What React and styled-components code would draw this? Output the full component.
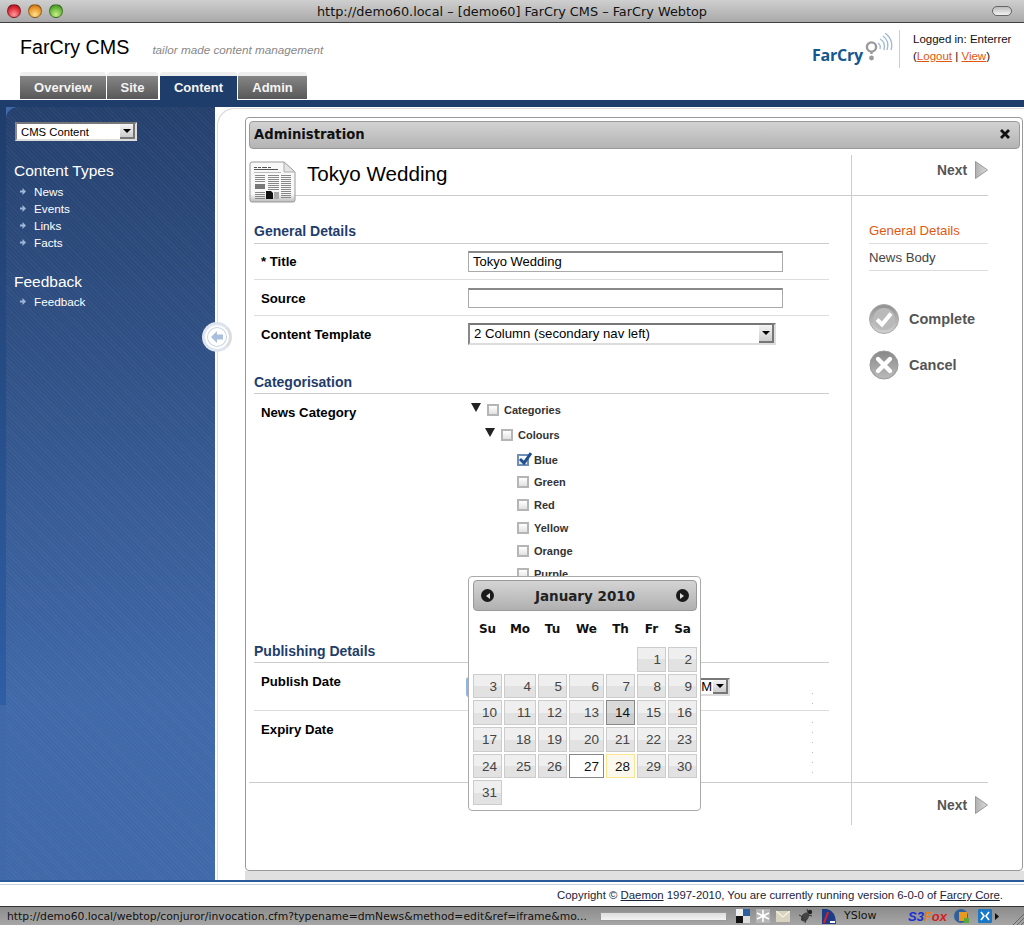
import React from 'react';
import styled, { createGlobalStyle } from 'styled-components';

const Global = createGlobalStyle`
  html, body { margin: 0; padding: 0; background: #fff; }
  body { font-family: "Liberation Sans", Arial, sans-serif; }
  * { box-sizing: border-box; }
`;

const Page = styled.div`
  width: 1024px;
  height: 925px;
  display: flex;
  flex-direction: column;
  overflow: hidden;
  position: relative;
`;

/* browser chrome */
const TitleBar = styled.div`
  height: 23px;
  flex: none;
  display: flex;
  align-items: center;
  padding: 0 12px 0 7px;
  background: linear-gradient(#cfcfcf, #a9a9a9);
  border-bottom: 1px solid #3f3f3f;
`;
const Lights = styled.div`
  display: flex;
  gap: 7px;
`;
const Light = styled.span`
  width: 14px;
  height: 14px;
  border-radius: 50%;
  border: 1px solid rgba(0, 0, 0, 0.35);
  background: radial-gradient(circle at 50% 80%, ${p => p.$glow} 0%, ${p => p.$base} 60%, ${p => p.$dark} 100%);
`;
const PageTitle = styled.div`
  flex: 1;
  text-align: center;
  font: 12.85px "DejaVu Sans", sans-serif;
  color: #111;
  padding-right: 31px;
`;
const Pill = styled.span`
  width: 20px;
  height: 10px;
  border-radius: 5px;
  border: 1px solid #666;
  background: linear-gradient(#bbb, #f2f2f2);
`;

/* header */
const Header = styled.header`
  height: 77px;
  flex: none;
  display: flex;
  flex-direction: column;
  background: #fff;
`;
const Brand = styled.div`
  height: 49px;
  flex: none;
  display: flex;
  align-items: flex-start;
  padding-left: 20px;
`;
const SiteName = styled.div`
  font-size: 19.7px;
  line-height: 24px;
  margin-top: 12px;
  color: #000;
`;
const Tagline = styled.div`
  font-size: 11.7px;
  font-style: italic;
  color: #888;
  line-height: 14px;
  margin: 20px 0 0 23px;
`;
const Logo = styled.div`
  margin-left: auto;
  margin-top: 10px;
  height: 28px;
  display: flex;
  align-items: flex-end;
  color: #14578f;
  font: 700 16px/20px "Open Sans", sans-serif;
`;
const LogoWord = styled.span`
  letter-spacing: -0.2px;
  margin-bottom: -4px;
`;
const Who = styled.div`
  margin-left: 6px;
  margin-top: 7px;
  width: 125px;
  height: 38px;
  flex: none;
  padding: 1px 0 0 13px;
  border-left: 1px solid #ccc;
  font-size: 11.5px;
  line-height: 17px;
  color: #111;
  a { color: #e2570f; }
`;
const Tabs = styled.nav`
  display: flex;
  gap: 1px;
  padding-left: 20px;
`;
const Tab = styled.div`
  height: ${p => (p.$active ? '28px' : '27px')};
  width: ${p => p.$w}px;
  margin-right: ${p => p.$gap || 0}px;
  display: flex;
  align-items: center;
  justify-content: center;
  padding-bottom: ${p => (p.$active ? '1px' : '0')};
  font-size: 13px;
  font-weight: 700;
  color: #f4f4f4;
  border-radius: 3px 3px 0 0;
  border-top: 4px solid #eee;
  background: ${p => (p.$active ? '#1f3d6b' : 'linear-gradient(#858585, #585858)')};
`;
const Band = styled.div`
  height: 7px;
  flex: none;
  background: #1f3d6b;
`;

/* main area */
const Main = styled.div`
  flex: 1;
  display: flex;
  min-height: 0;
  position: relative;
`;
const SideWrap = styled.aside`
  width: 215px;
  flex: none;
  display: flex;
  background: #4069a9;
`;
const SideEdge = styled.div`
  width: 6px;
  height: 598px;
  flex: none;
  background: linear-gradient(#1f3d6b, #2f5ea5);
`;
const SidePanel = styled.div`
  flex: 1;
  padding: 15px 0 0 8px;
  border-radius: 12px 0 0 0;
  color: #fff;
  background:
    repeating-linear-gradient(45deg, rgba(255, 255, 255, 0.035) 0 1px, transparent 1px 3px),
    linear-gradient(#25406d 0, #4069a9 598px);
`;
const NativeSelect = styled.div`
  display: flex;
  align-items: center;
  justify-content: space-between;
  width: ${p => p.$w}px;
  height: ${p => p.$h}px;
  flex: none;
  margin-left: ${p => p.$left || 0}px;
  font-size: ${p => p.$size}px;
  line-height: 14px;
  color: #000;
  background: #fff;
  border-top: 2px solid #777;
  border-left: 2px solid #888;
  border-right: 2px solid #ddd;
  border-bottom: 2px solid #ddd;
  padding-left: ${p => p.$pad}px;
`;
const SelectValue = styled.span`
  margin-left: auto;
  margin-right: 1px;
  white-space: nowrap;
`;
const SelectButton = styled.span`
  width: 15px;
  height: 100%;
  flex: none;
  display: flex;
  align-items: center;
  justify-content: center;
  background: linear-gradient(#f4f4f4, #ccc);
  border-right: 2px solid #777;
  border-bottom: 2px solid #777;
  &::after {
    content: '';
    border-left: 4px solid transparent;
    border-right: 4px solid transparent;
    border-top: 4px solid #000;
  }
`;
const SideTitle = styled.h3`
  margin: ${p => p.$top}px 0 0;
  font-size: 15.5px;
  font-weight: 400;
  line-height: 20px;
`;
const SideList = styled.ul`
  list-style: none;
  margin: ${p => p.$top}px 0 0;
  padding: 0;
`;
const SideItem = styled.li`
  height: 17px;
  display: flex;
  align-items: center;
  gap: 8px;
  padding-left: 6px;
  font-size: 11.7px;
  color: #fff;
`;
const Bullet = () => (
  <svg width="6" height="7" viewBox="0 0 6 7" style={{ flex: 'none' }}>
    <path d="M0 2.5h2.5V0L6 3.5 2.5 7V4.5H0z" fill="#9db6d8" />
  </svg>
);

const Content = styled.main`
  flex: 1;
  min-width: 0;
  display: flex;
  flex-direction: column;
  background: #fff;
  border-radius: 16px 0 0 0;
  position: relative;
  box-shadow: inset 3px 2px 0 -1px #fff, inset 4px 3px 0 -1px #ddd;
`;
const Collapse = styled.div`
  position: absolute;
  left: -13px;
  top: 215px;
  width: 30px;
  height: 30px;
  border-radius: 50%;
  background: #fff;
  border: 3px solid #dfe5ee;
  border-right-color: #ddd;
  display: flex;
  align-items: center;
  justify-content: center;
  box-shadow: inset 0 0 0 2px #fff, inset 0 0 0 3px #c9d6e6;
`;
const Window = styled.section`
  flex: 1;
  margin: 10px 1px 0 30px;
  padding: 3px 2px 0 3px;
  border: 1px solid #999;
  border-radius: 4px;
  background: #fff;
  display: flex;
  flex-direction: column;
`;
const WindowBar = styled.div`
  height: 28px;
  flex: none;
  display: flex;
  align-items: center;
  justify-content: space-between;
  padding: 0 9px 2px 4px;
  border: 1px solid #999;
  border-radius: 4px;
  background: linear-gradient(#d2d2d2, #b4b4b4);
  font: 700 13.2px "DejaVu Sans", sans-serif;
  color: #111;
`;
const Strip = styled.div`
  height: 9px;
  flex: none;
  margin-left: 30px;
  background: #e0e0e0;
`;
const Split = styled.div`
  display: flex;
  flex: none;
  width: 739px;
  height: ${p => p.$h}px;
  margin-top: ${p => p.$top || 0}px;
  border-bottom: ${p => (p.$line ? '1px solid #ccc' : '0')};
`;
const Pane = styled.div`
  width: 602px;
  flex: none;
`;
const Rail = styled.div`
  flex: 1;
  border-left: 1px solid #ccc;
`;
const NextLink = styled.div`
  display: flex;
  justify-content: flex-end;
  align-items: center;
  gap: 8px;
  font-size: 13.8px;
  font-weight: 700;
  color: #555;
  padding-top: ${p => p.$top}px;
`;
const Heading = styled.div`
  display: flex;
  align-items: flex-start;
  gap: 11px;
  height: 40px;
`;
const HeadingIcon = styled.svg`
  flex: none;
  margin-top: 6px;
`;
const HeadingText = styled.h1`
  margin: 6px 0 0;
  font-size: 20.6px;
  font-weight: 400;
  line-height: 26px;
  color: #000;
`;
const Form = styled.form`
  padding-left: 5px;
  width: 580px;
`;
const SectionTitle = styled.h2`
  margin: ${p => p.$top}px 0 0;
  padding-bottom: ${p => p.$pad}px;
  font-size: 14px;
  line-height: 16px;
  font-weight: 700;
  color: #1f3d6b;
  border-bottom: 1px solid #ccc;
`;
const Row = styled.div`
  display: grid;
  grid-template-columns: 207px 1fr;
  align-items: start;
  height: ${p => p.$h}px;
  padding: ${p => p.$top}px 0 0 7px;
  border-bottom: ${p => (p.$line ? '1px solid #ddd' : '0')};
`;
const Label = styled.label`
  font-size: 13.2px;
  font-weight: 700;
  line-height: 18px;
  margin-top: ${p => p.$top || 0}px;
  color: #000;
`;
const TextInput = styled.div`
  width: 315px;
  height: ${p => p.$h}px;
  padding-left: 4px;
  font-size: 13px;
  line-height: 18px;
  color: #000;
  background: #fff;
  border: 1px solid #aaa;
  border-top: 2px solid #888;
`;
const Tree = styled.div`
  height: 252px;
  overflow: hidden;
  margin-top: -4px;
`;
const TreeRow = styled.div`
  display: flex;
  align-items: center;
  height: ${p => p.$h}px;
  padding-left: ${p => p.$indent}px;
  font-size: 11px;
  font-weight: 700;
  color: #333;
`;
const Caret = styled.span`
  width: 0;
  height: 0;
  flex: none;
  margin: -5px 6px 0 0;
  border-left: 5.5px solid transparent;
  border-right: 5.5px solid transparent;
  border-top: 9px solid #222;
`;
const Check = styled.span`
  width: 12px;
  height: 12px;
  flex: none;
  margin-right: 5px;
  position: relative;
  border: 2px solid ${p => (p.$on ? '#6f8fb8' : '#b5b5b5')};
  background: linear-gradient(#fff, #e2e2e2);
  svg { position: absolute; left: -1px; top: -4px; }
`;
const DateCell = styled.div`
  display: flex;
  align-items: flex-start;
`;
const DateField = styled.div`
  display: flex;
  align-items: center;
  justify-content: space-between;
  flex: none;
  width: 264px;
  margin: 4px 0 0 -2px;
`;
const DateInput = styled.div`
  width: 140px;
  height: 20px;
  border: 2px solid #8fb4e6;
  border-radius: 3px;
  background: #fff;
`;
const Dots = styled.span`
  display: block;
  flex: none;
  width: 1px;
  height: ${p => p.$h}px;
  margin: ${p => p.$top}px 0 0 ${p => p.$left}px;
  background: repeating-linear-gradient(#bbb 0 1px, transparent 1px 10px);
`;
const SideNav = styled.ul`
  list-style: none;
  margin: 21px 0 0 17px;
  padding: 0;
`;
const SideNavItem = styled.li`
  height: 27px;
  line-height: 27px;
  font-size: 13.2px;
  color: ${p => (p.$active ? '#e2570f' : '#444')};
  border-bottom: 1px solid #ddd;
`;
const Actions = styled.div`
  display: flex;
  flex-direction: column;
  gap: 16px;
  margin: 33px 0 0 17px;
`;
const Action = styled.div`
  display: flex;
  align-items: center;
  gap: 10px;
  height: 30px;
  font-size: 14.5px;
  font-weight: 700;
  color: #555;
`;

/* calendar popup */
const Calendar = styled.div`
  position: absolute;
  left: 253px;
  top: 469px;
  width: 233px;
  height: 235px;
  padding: 3px 3px 0 4px;
  background: #fff;
  border: 1px solid #aaa;
  border-radius: 4px;
`;
const CalHead = styled.div`
  height: 31px;
  display: flex;
  align-items: center;
  justify-content: space-between;
  padding: 0 7px;
  border: 1px solid #999;
  border-radius: 4px;
  background: linear-gradient(#d4d4d4, #b0b0b0);
  font: 700 13.5px "DejaVu Sans", sans-serif;
  color: #222;
`;
const CalArrow = styled.span`
  width: 13px;
  height: 13px;
  border-radius: 50%;
  background: #1a1a1a;
  display: flex;
  align-items: center;
  justify-content: center;
  &::after {
    content: '';
    border-top: 3.5px solid transparent;
    border-bottom: 3.5px solid transparent;
    border-${p => (p.$next ? 'left' : 'right')}: 4px solid #ddd;
  }
`;
const CalGrid = styled.div`
  display: grid;
  grid-template-columns: 29px 32px 29px 35px 29px 29px 29px;
  grid-auto-rows: 24.7px;
  column-gap: 2px;
  row-gap: 2px;
`;
const Weekdays = styled(CalGrid)`
  grid-auto-rows: 19px;
  margin-top: 9px;
  margin-bottom: 8px;
`;
const Weekday = styled.div`
  text-align: center;
  font: 700 12px/19px "DejaVu Sans", sans-serif;
  color: #111;
`;
const dayBg = {
  base: 'linear-gradient(#efefef 0 50%, #e2e2e2 50%)',
  selected: 'linear-gradient(#dadada 0 50%, #cecece 50%)',
  today: '#fff',
  hover: '#fbf9ee',
};
const dayBorder = { base: '#ccc', selected: '#888', today: '#888', hover: '#fbe58f' };
const Day = styled.div`
  grid-column: ${p => p.$col || 'auto'};
  padding-right: 4px;
  text-align: right;
  font-size: 13.5px;
  line-height: 23px;
  color: ${p => (p.$kind === 'base' ? '#444' : '#111')};
  border: 1px solid ${p => dayBorder[p.$kind]};
  background: ${p => dayBg[p.$kind]};
`;

/* footer + status bar */
const FootRule = styled.div`
  height: 5px;
  flex: none;
  background: #fff;
  border-top: 2px solid #2a5a9a;
  border-bottom: 1px solid #ccd2da;
`;
const Footer = styled.footer`
  height: 21px;
  flex: none;
  text-align: right;
  padding: 2px 21px 0 0;
  font-size: 11.4px;
  line-height: 16px;
  color: #1a2438;
  a { color: inherit; }
`;
const StatusBar = styled.div`
  height: 19px;
  flex: none;
  display: flex;
  align-items: center;
  padding-left: 7px;
  border-top: 1px solid #333;
  background: linear-gradient(#8c8c8c, #a6a6a6);
  font: 10.8px "DejaVu Sans", sans-serif;
  color: #111;
`;
const StatusUrl = styled.span`
  width: 593px;
  flex: none;
  white-space: nowrap;
  overflow: hidden;
`;
const Progress = styled.span`
  width: 127px;
  height: 9px;
  flex: none;
  background: linear-gradient(#ddd, #f4f4f4);
  border: 1px solid #999;
`;
const Tray = styled.div`
  display: flex;
  align-items: center;
  flex: 1;
  margin-left: 9px;
  height: 100%;
`;
const TrayIcon = styled.svg`
  flex: none;
  margin-right: ${p => p.$gap}px;
`;
const Grip = styled.svg`
  flex: none;
  margin-left: auto;
  align-self: flex-end;
`;
const YSlow = styled.span`
  color: #111;
  font-size: 11px;
  width: 31px;
  margin-right: 33px;
  margin-top: -1px;
`;
const S3Fox = styled.span`
  font: italic 900 13px "Liberation Sans", sans-serif;
  color: #1b2fd6;
  width: 36px;
  margin-right: 10px;
  em { font-style: inherit; color: #e8801a; }
  b { color: #d3201c; }
`;

const Triangle = () => (
  <svg width="13" height="18" viewBox="0 0 13 18">
    <defs>
      <linearGradient id="tri" x1="0" x2="1">
        <stop offset="0" stopColor="#b0b0b0" />
        <stop offset="1" stopColor="#dcdcdc" />
      </linearGradient>
    </defs>
    <path d="M.5.5 12.5 9 .5 17.5z" fill="url(#tri)" stroke="#999" />
  </svg>
);

const Newspaper = () => (
  <HeadingIcon width="47" height="42" viewBox="0 0 47 42">
    <defs>
      <linearGradient id="paper" x1="0" y1="0" x2="0" y2="1">
        <stop offset="0.8" stopColor="#f8f8f8" />
        <stop offset="1" stopColor="#bbb" />
      </linearGradient>
    </defs>
    <path d="M1 3q0-2 2-2h32l11 10v28q0 2-2 2H3q-2 0-2-2z" fill="url(#paper)" stroke="#999" />
    <path d="M35 1v10h11z" fill="#e4e4e4" stroke="#aaa" />
    <path d="M5 6.5h3M9 6.5h3M13 6.5h5M19 6.5h3M5 8.5h24" stroke="#555" />
    <path d="M5 11.5h27" stroke="#bbb" />
    <path
      d="M6 14.5h10M6 16.5h10M6 18.5h10M6 20.5h10M19 14.5h11M19 16.5h11M19 18.5h11M19 20.5h11M19 22.5h11M19 24.5h11M19 26.5h11M19 28.5h11M32 14.5h10M32 16.5h10M32 18.5h10M32 20.5h10M32 22.5h10M32 24.5h10M32 26.5h10M32 28.5h10M32 30.5h10M32 32.5h10M32 34.5h10M32 36.5h10M6 31.5h10M6 33.5h10M6 35.5h10M6 37.5h10"
      stroke="#888"
    />
    <path d="M6 23h10v5H6z" fill="#777" />
    <path d="M17 30h5l2 2v6h-7z" fill="#111" />
    <path d="M25 31h5v7h-5z" fill="#aaa" />
  </HeadingIcon>
);

const Signal = () => (
  <svg width="28" height="28" viewBox="0 0 28 28" style={{ marginLeft: 2 }}>
    <circle cx="6.5" cy="14" r="4.6" fill="none" stroke="#9a9a9a" strokeWidth="2.4" />
    <circle cx="6.5" cy="25" r="2.4" fill="#9a9a9a" />
    <path d="M6.5 19v2" stroke="#9a9a9a" strokeWidth="2.4" />
    <g fill="none" stroke="#9fb9d3" strokeWidth="1.3">
      <path d="M13 10q3 2 2 6" />
      <path d="M15 6q6 3 4 11" />
      <path d="M18 3q7 5 4 14" />
      <path d="M20 0q9 7 6 17" />
    </g>
  </svg>
);

const RoundCheck = () => (
  <svg width="30" height="30" viewBox="0 0 30 30">
    <defs>
      <linearGradient id="rnd" x1="0" y1="0" x2="0" y2="1">
        <stop offset="0" stopColor="#8f8f8f" />
        <stop offset="1" stopColor="#d2d2d2" />
      </linearGradient>
    </defs>
    <circle cx="15" cy="15" r="14.5" fill="url(#rnd)" stroke="#aaa" />
    <circle cx="15" cy="15" r="11" fill="#b9b9b9" />
    <path d="M8 15.5l5 5 9-11" fill="none" stroke="#fff" strokeWidth="4" />
  </svg>
);

const RoundCross = () => (
  <svg width="30" height="30" viewBox="0 0 30 30">
    <defs>
      <linearGradient id="rnx" x1="0" y1="0" x2="0" y2="1">
        <stop offset="0" stopColor="#888" />
        <stop offset="1" stopColor="#bbb" />
      </linearGradient>
    </defs>
    <circle cx="15" cy="15" r="14" fill="url(#rnx)" stroke="#999" />
    <path d="M9 9l12 12M21 9 9 21" stroke="#fff" strokeWidth="4.4" strokeLinecap="round" />
  </svg>
);

const weekdays = ['Su', 'Mo', 'Tu', 'We', 'Th', 'Fr', 'Sa'];
const days = Array.from({ length: 31 }, (_, i) => i + 1);
const dayKind = d => (d === 14 ? 'selected' : d === 27 ? 'today' : d === 28 ? 'hover' : 'base');
const colours = [
  ['Blue', 20, true],
  ['Green', 23],
  ['Red', 23],
  ['Yellow', 23],
  ['Orange', 23],
  ['Purple', 23],
];

export default function App() {
  return (
    <Page>
      <Global />
      <TitleBar>
        <Lights>
          <Light $base="#dd2a35" $glow="#ff9a9a" $dark="#8f1018" />
          <Light $base="#e8962a" $glow="#ffe08a" $dark="#a55c10" />
          <Light $base="#66b53a" $glow="#c8f08a" $dark="#35801a" />
        </Lights>
        <PageTitle>http://demo60.local – [demo60] FarCry CMS – FarCry Webtop</PageTitle>
        <Pill />
      </TitleBar>

      <Header>
        <Brand>
          <SiteName>FarCry CMS</SiteName>
          <Tagline>tailor made content management</Tagline>
          <Logo>
            <LogoWord>FarCry</LogoWord>
            <Signal />
          </Logo>
          <Who>
            Logged in: Enterrer
            <br />
            (<a href="#logout">Logout</a> | <a href="#view">View</a>)
          </Who>
        </Brand>
        <Tabs>
          <Tab $w={86}>Overview</Tab>
          <Tab $w={51} $gap={1}>Site</Tab>
          <Tab $w={77} $active>Content</Tab>
          <Tab $w={69}>Admin</Tab>
        </Tabs>
      </Header>
      <Band />

      <Main>
        <SideWrap>
          <SideEdge />
          <SidePanel>
            <NativeSelect $w={122} $h={19} $size={11.3} $left={1} $pad={4}>
              CMS Content
              <SelectButton />
            </NativeSelect>
            <SideTitle $top={20}>Content Types</SideTitle>
            <SideList $top={2}>
              {['News', 'Events', 'Links', 'Facts'].map(name => (
                <SideItem key={name}><Bullet />{name}</SideItem>
              ))}
            </SideList>
            <SideTitle $top={21}>Feedback</SideTitle>
            <SideList $top={1}>
              <SideItem><Bullet />Feedback</SideItem>
            </SideList>
          </SidePanel>
        </SideWrap>

        <Content>
          <Collapse>
            <svg width="12" height="12" viewBox="0 0 12 12">
              <path d="M0 6 6 0v3.5h6v5H6V12z" fill="#a9bfdb" />
            </svg>
          </Collapse>
          <Window>
            <WindowBar>
              Administration
              <svg width="10" height="10" viewBox="0 0 10 10">
                <path d="M1 1l8 8M9 1 1 9" stroke="#111" strokeWidth="2.8" />
              </svg>
            </WindowBar>

            <Split $h={41} $top={6} $line>
              <Pane>
                <Heading>
                  <Newspaper />
                  <HeadingText>Tokyo Wedding</HeadingText>
                </Heading>
              </Pane>
              <Rail>
                <NextLink $top={6}>Next <Triangle /></NextLink>
              </Rail>
            </Split>

            <Split $h={587} $line>
              <Pane>
                <Form>
                  <SectionTitle $top={27} $pad={4}>General Details</SectionTitle>
                  <Row $h={36} $top={7} $line>
                    <Label $top={2}>* Title</Label>
                    <TextInput $h={21}>Tokyo Wedding</TextInput>
                  </Row>
                  <Row $h={36} $top={8} $line>
                    <Label $top={2}>Source</Label>
                    <TextInput $h={20} />
                  </Row>
                  <Row $h={48} $top={7}>
                    <Label $top={3}>Content Template</Label>
                    <NativeSelect $w={308} $h={22} $size={13.2} $pad={4}>
                      2 Column (secondary nav left)
                      <SelectButton />
                    </NativeSelect>
                  </Row>
                  <SectionTitle $top={10} $pad={3}>Categorisation</SectionTitle>
                  <Row $h={249} $top={10}>
                    <Label>News Category</Label>
                    <Tree>
                      <TreeRow $h={20} $indent={3}>
                        <Caret /><Check />Categories
                      </TreeRow>
                      <TreeRow $h={30} $indent={17}>
                        <Caret /><Check />Colours
                      </TreeRow>
                      {colours.map(([name, h, on]) => (
                        <TreeRow key={name} $h={h} $indent={49}>
                          <Check $on={on}>
                            {on && (
                              <svg width="14" height="14" viewBox="0 0 14 14">
                                <path d="M2 7l4 4 7-10" fill="none" stroke="#1f4f8f" strokeWidth="3" />
                              </svg>
                            )}
                          </Check>
                          {name}
                        </TreeRow>
                      ))}
                    </Tree>
                  </Row>
                  <SectionTitle $top={0} $pad={3}>Publishing Details</SectionTitle>
                  <Row $h={48} $top={10} $line>
                    <Label>Publish Date</Label>
                    <DateCell>
                      <DateField>
                        <DateInput />
                        <NativeSelect $w={80} $h={18} $size={13} $pad={4}>
                          <SelectValue>12:00 PM</SelectValue>
                          <SelectButton />
                        </NativeSelect>
                      </DateField>
                      <Dots $h={11} $top={20} $left={82} />
                    </DateCell>
                  </Row>
                  <Row $h={70} $top={10}>
                    <Label>Expiry Date</Label>
                    <Dots $h={52} $top={1} $left={344} />
                  </Row>
                </Form>
              </Pane>
              <Rail>
                <SideNav>
                  <SideNavItem $active>General Details</SideNavItem>
                  <SideNavItem>News Body</SideNavItem>
                </SideNav>
                <Actions>
                  <Action><RoundCheck />Complete</Action>
                  <Action><RoundCross />Cancel</Action>
                </Actions>
              </Rail>
            </Split>

            <Split $h={42}>
              <Pane />
              <Rail>
                <NextLink $top={13}>Next <Triangle /></NextLink>
              </Rail>
            </Split>

            <Calendar>
              <CalHead>
                <CalArrow />
                January 2010
                <CalArrow $next />
              </CalHead>
              <Weekdays>
                {weekdays.map(w => <Weekday key={w}>{w}</Weekday>)}
              </Weekdays>
              <CalGrid>
                {days.map(d => (
                  <Day key={d} $kind={dayKind(d)} $col={d === 1 ? 6 : undefined}>{d}</Day>
                ))}
              </CalGrid>
            </Calendar>
          </Window>
          <Strip />
        </Content>
      </Main>

      <FootRule />
      <Footer>
        Copyright © <a href="#daemon">Daemon</a> 1997-2010, You are currently running version 6-0-0 of <a href="#core">Farcry Core</a>.
      </Footer>
      <StatusBar>
        <StatusUrl>http://demo60.local/webtop/conjuror/invocation.cfm?typename=dmNews&amp;method=edit&amp;ref=iframe&amp;mo...</StatusUrl>
        <Progress />
        <Tray>
          <TrayIcon width="14" height="14" viewBox="0 0 14 14" $gap={6}>
            <path d="M0 0h7v7H0z" fill="#eee" />
            <path d="M7 0h7v7H7z" fill="#2c5f9e" />
            <path d="M0 7h7v7H0z" fill="#111" />
            <path d="M7 7h7v7H7z" fill="#ddd" />
          </TrayIcon>
          <TrayIcon width="14" height="14" viewBox="0 0 14 14" $gap={6}>
            <path d="M0 0h14v14H0z" fill="#b5b5b5" />
            <path d="M7 1v12M1 4l12 6M13 4 1 10" stroke="#fff" strokeWidth="1.6" />
          </TrayIcon>
          <TrayIcon width="14" height="11" viewBox="0 0 14 11" $gap={8}>
            <path d="M0 0h14v11H0z" fill="#d8d4c0" />
            <path d="M0 0l7 6 7-6" fill="none" stroke="#f6f4e8" strokeWidth="1.2" />
          </TrayIcon>
          <TrayIcon width="16" height="16" viewBox="0 0 16 16" $gap={7}>
            <ellipse cx="7" cy="9" rx="3.5" ry="5" transform="rotate(35 7 9)" fill="#444" />
            <circle cx="12" cy="4" r="2.2" fill="#222" />
            <path d="M1 7l4 2M3 12l3-2M7 15l1-4M9 1l1 4M14 8l-4-1" stroke="#333" />
          </TrayIcon>
          <TrayIcon width="16" height="16" viewBox="0 0 16 16" $gap={7}>
            <path d="M1 16V1h5q9 2 9 15z" fill="#1d3b86" />
            <path d="M3 15 7 4" stroke="#e02020" strokeWidth="2" />
            <path d="M9 14h5" stroke="#fff" strokeWidth="2" />
          </TrayIcon>
          <YSlow>YSlow</YSlow>
          <S3Fox>S3<em>F</em><b>ox</b></S3Fox>
          <TrayIcon width="17" height="17" viewBox="0 0 17 17" $gap={7}>
            <circle cx="7" cy="8" r="7" fill="#2f5f9e" />
            <path d="M5 4h8v9H5z" fill="#e79a1f" />
            <path d="M10 10h5v5h-5z" fill="#5aa83a" />
          </TrayIcon>
          <TrayIcon width="14" height="14" viewBox="0 0 14 14" $gap={3}>
            <path d="M0 1q0-1 1-1h12q1 0 1 1v12q0 1-1 1H1q-1 0-1-1z" fill="#1b78c8" />
            <path d="M3 3l3 4-3 4M11 3 8 7l3 4" fill="none" stroke="#fff" strokeWidth="1.6" />
          </TrayIcon>
          <svg width="4" height="7" viewBox="0 0 4 7"><path d="M0 0l4 3.5L0 7z" fill="#111" /></svg>
          <Grip width="11" height="11" viewBox="0 0 11 11">
            <path d="M0 11 11 0M4 11l7-7M8 11l3-3" stroke="#666" />
          </Grip>
        </Tray>
      </StatusBar>
    </Page>
  );
}
